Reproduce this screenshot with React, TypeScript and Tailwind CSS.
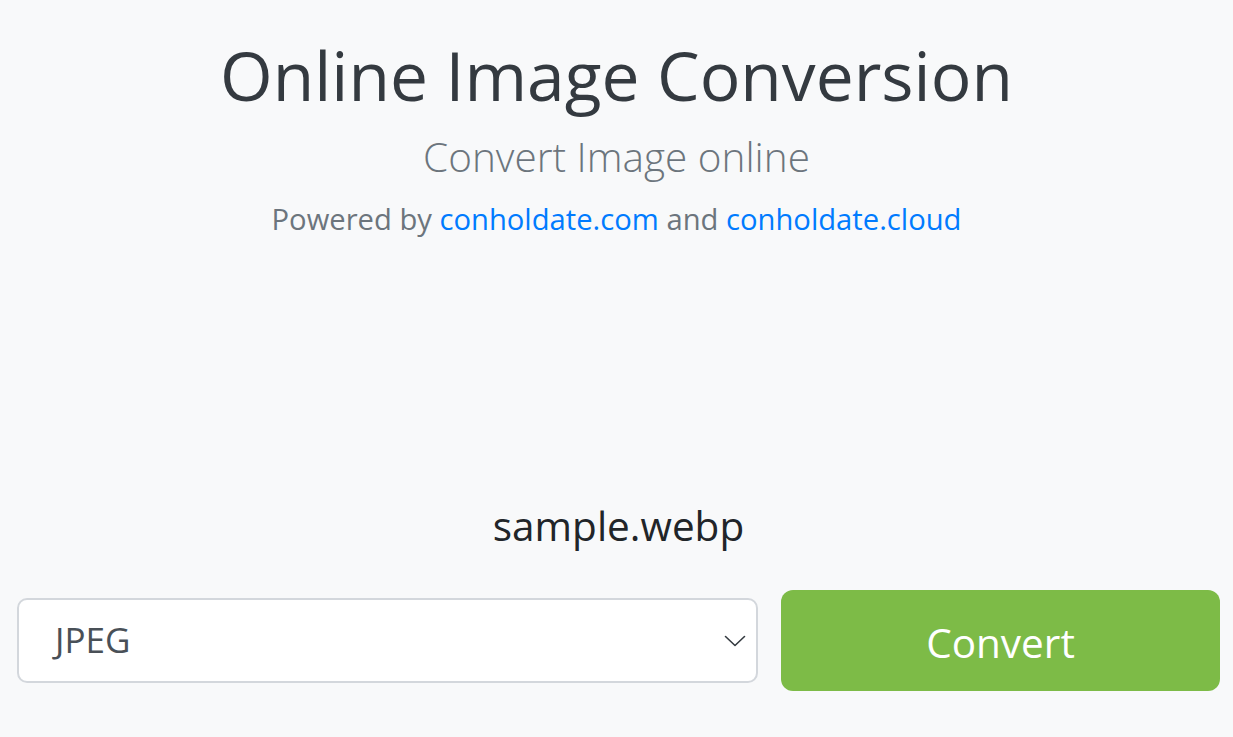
import React from 'react';

const App: React.FC = () => {
    return (
        <div className="min-h-[737px] bg-[#f8f9fa] font-['Open_Sans',sans-serif]">
            <header className="flex flex-col items-center pt-[33px] text-center">
                <h1 className="text-[67.7px] leading-[84px] font-normal text-[#343a40]">Online Image Conversion</h1>
                <h2 className="mt-[15px] text-[40.5px] leading-[50px] font-light text-[#6c757d]">Convert Image online</h2>
                <p className="mt-[17px] text-[29.2px] leading-[40px] text-[#6c757d]">
                    Powered by <a href="#" className="text-[#007bff]">conholdate.com</a> and{' '}
                    <a href="#" className="text-[#007bff]">conholdate.cloud</a>
                </p>
            </header>

            <main className="mt-[262px] pl-[17px] pr-[13px]">
                <p className="text-center text-[40.5px] leading-[50px] text-[#212529]">sample.webp</p>
                <div className="mt-[39px] flex items-center gap-[23px]">
                    <div className="flex h-[85px] w-[741px] shrink-0 items-center justify-between rounded-[10px] border-2 border-[#d3d7dc] bg-white pl-[36px] pr-[10px]">
                        <span className="text-[35px] text-[#495057]">JPEG</span>
                        <svg width="22" height="12" viewBox="0 0 22 12" fill="none" className="text-[#343a40]">
                            <path d="M1.5 1.5l9.5 9 9.5-9" stroke="currentColor" strokeWidth="1.6" strokeLinecap="round" strokeLinejoin="round" />
                        </svg>
                    </div>
                    <button className="flex h-[101px] w-[439px] shrink-0 items-center justify-center rounded-[12px] bg-[#7dbb47] pt-[6px] text-[40.5px] text-white">
                        Convert
                    </button>
                </div>
            </main>
        </div>
    );
};

export default App;
